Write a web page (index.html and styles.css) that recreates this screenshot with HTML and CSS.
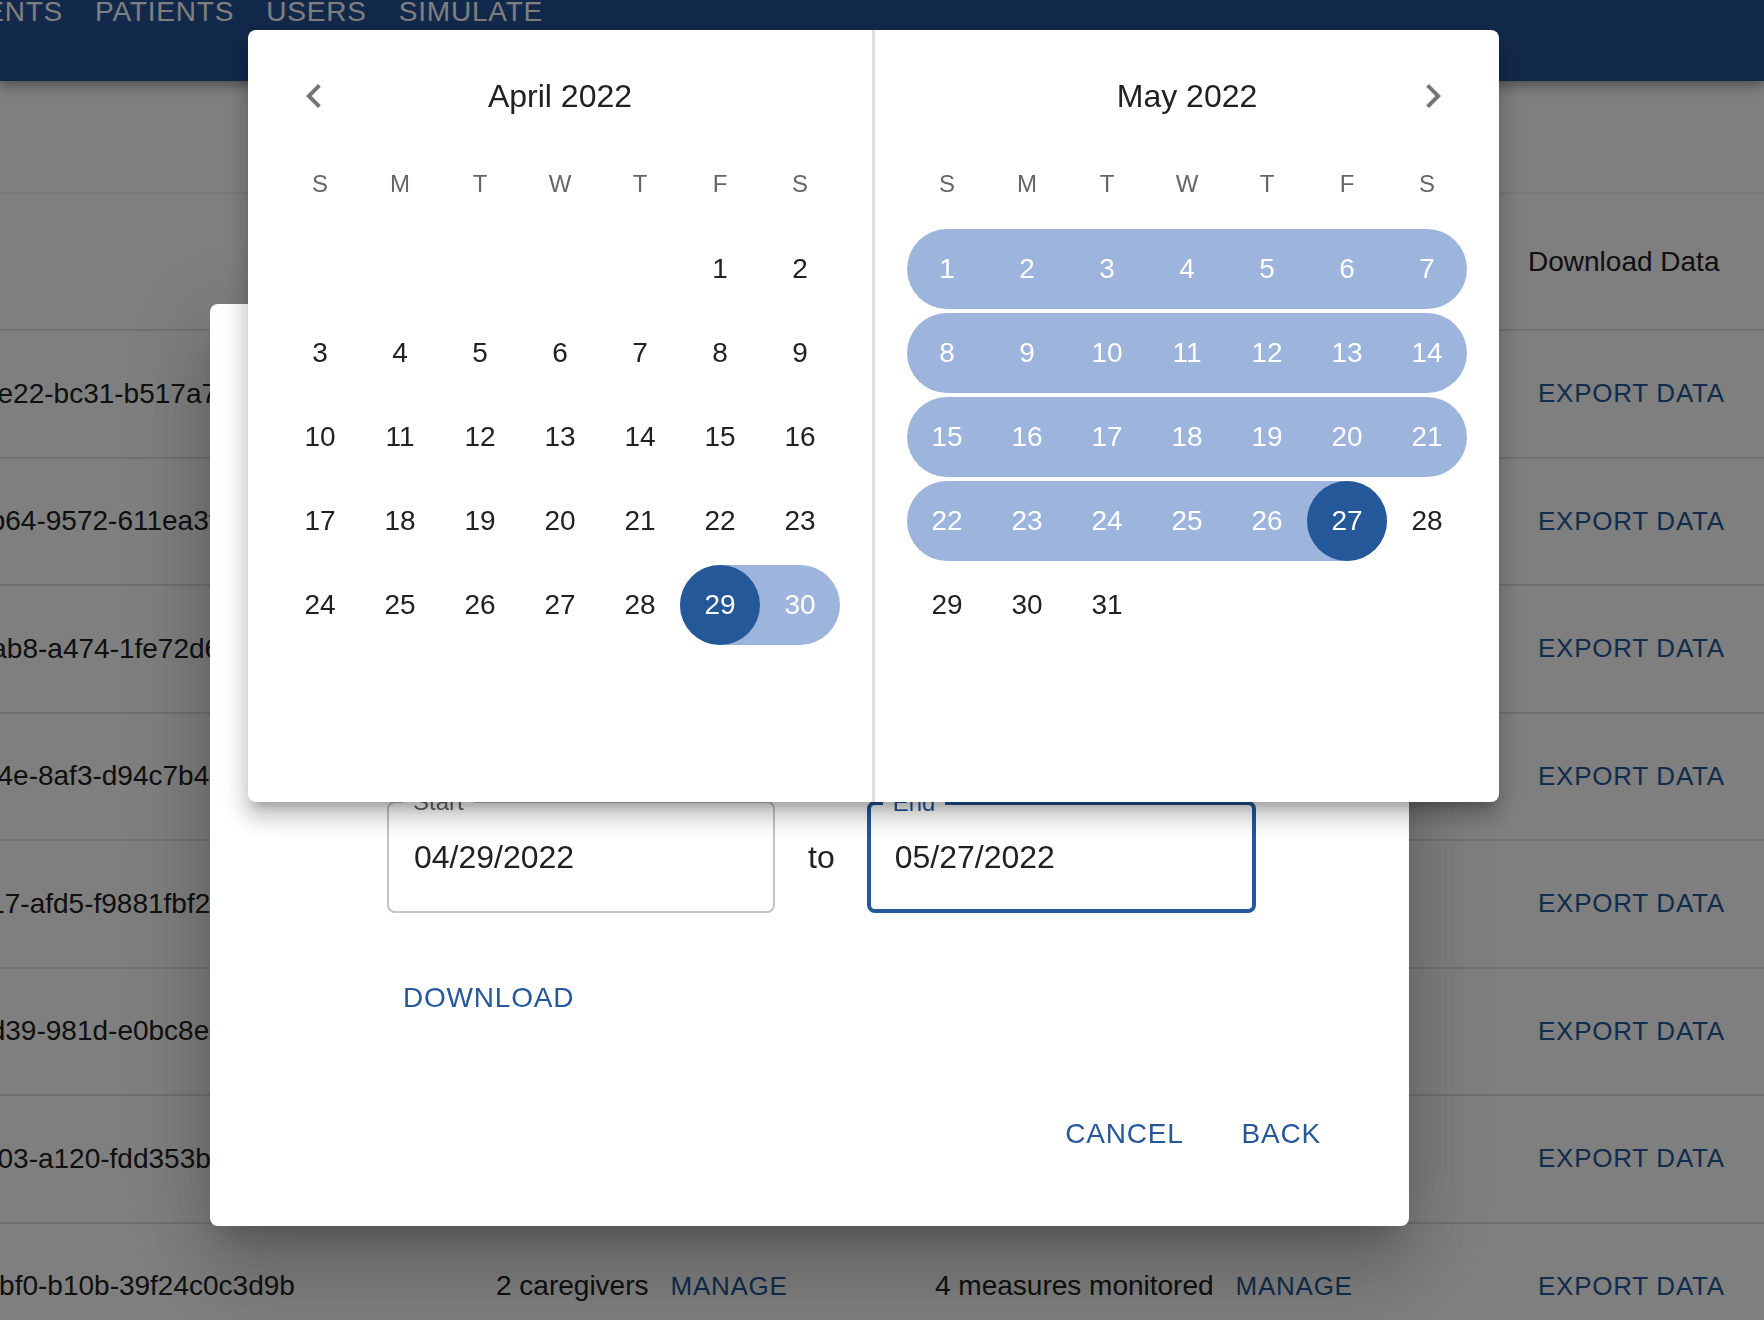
FILE: index.html
```html
<!DOCTYPE html>
<html lang="en">
<head>
    <meta charset="UTF-8">
    <title>Patients</title>
    <link rel="stylesheet" href="styles.css">
</head>
<body>

    <header class="appbar">
        <nav class="nav">
            <a>MEASUREMENTS</a>
            <a>PATIENTS</a>
            <a>USERS</a>
            <a>SIMULATE</a>
        </nav>
    </header>

    <div class="table">
        <div class="row head">
            <div class="cell">Patient ID</div>
            <div class="cell">Caregivers</div>
            <div class="cell">Measures</div>
            <div class="cell">Download Data</div>
        </div>
        <div class="row">
            <div class="cell">5d3a8b60-1c94-4e22-bc31-b517a7c9d204</div>
            <div class="cell">1 caregiver <button class="link">MANAGE</button></div>
            <div class="cell">3 measures monitored <button class="link">MANAGE</button></div>
            <div class="cell"><button class="link first">EXPORT DATA</button></div>
        </div>
        <div class="row">
            <div class="cell">a0c7e2d9-6f18-4b64-9572-611ea3f5c810</div>
            <div class="cell">2 caregivers <button class="link">MANAGE</button></div>
            <div class="cell">4 measures monitored <button class="link">MANAGE</button></div>
            <div class="cell"><button class="link first">EXPORT DATA</button></div>
        </div>
        <div class="row">
            <div class="cell">7e91b3f2-0d56-4ab8-a474-1fe72d6b9c31</div>
            <div class="cell">1 caregiver <button class="link">MANAGE</button></div>
            <div class="cell">2 measures monitored <button class="link">MANAGE</button></div>
            <div class="cell"><button class="link first">EXPORT DATA</button></div>
        </div>
        <div class="row">
            <div class="cell">f2d8f0c5-7a3b-494e-8af3-d94c7b4e1a60</div>
            <div class="cell">3 caregivers <button class="link">MANAGE</button></div>
            <div class="cell">4 measures monitored <button class="link">MANAGE</button></div>
            <div class="cell"><button class="link first">EXPORT DATA</button></div>
        </div>
        <div class="row">
            <div class="cell">e8b05f3c-9ffa-4517-afd5-f9881fbf2e07</div>
            <div class="cell">2 caregivers <button class="link">MANAGE</button></div>
            <div class="cell">1 measure monitored <button class="link">MANAGE</button></div>
            <div class="cell"><button class="link first">EXPORT DATA</button></div>
        </div>
        <div class="row">
            <div class="cell">3f6a1c84-b27e-4d39-981d-e0bc8e5a7f12</div>
            <div class="cell">2 caregivers <button class="link">MANAGE</button></div>
            <div class="cell">4 measures monitored <button class="link">MANAGE</button></div>
            <div class="cell"><button class="link first">EXPORT DATA</button></div>
        </div>
        <div class="row">
            <div class="cell">9b2e7f41-6c0d-4f03-a120-fdd353b8e9c5</div>
            <div class="cell">1 caregiver <button class="link">MANAGE</button></div>
            <div class="cell">3 measures monitored <button class="link">MANAGE</button></div>
            <div class="cell"><button class="link first">EXPORT DATA</button></div>
        </div>
        <div class="row">
            <div class="cell">d7a4e912-5b83-4bf0-b10b-39f24c0c3d9b</div>
            <div class="cell">2 caregivers <button class="link">MANAGE</button></div>
            <div class="cell">4 measures monitored <button class="link">MANAGE</button></div>
            <div class="cell"><button class="link first">EXPORT DATA</button></div>
        </div>
    </div>

    <div class="backdrop"></div>

    <div class="dialog">
        <h2 class="dialog-title">Download Data</h2>
        <div class="dialog-content">
            <div class="range">
                <div class="field">
                    <span class="field-label">Start</span>
                    <span class="field-value">04/29/2022</span>
                </div>
                <span class="to">to</span>
                <div class="field focused">
                    <span class="field-label">End</span>
                    <span class="field-value">05/27/2022</span>
                </div>
            </div>
            <button class="text-btn">DOWNLOAD</button>
        </div>
        <div class="dialog-actions">
            <button class="text-btn">CANCEL</button>
            <button class="text-btn">BACK</button>
        </div>
    </div>

    <!-- date range popper -->
    <div class="popover">
        <div class="month">
            <div class="month-head">
                <button class="arrow">
                    <svg viewBox="0 0 24 24"><path d="M15.41 7.41 14 6l-6 6 6 6 1.41-1.41L10.83 12z"/></svg>
                </button>
                <div class="month-title">April 2022</div>
            </div>
            <div class="weekdays">
                <span>S</span><span>M</span><span>T</span><span>W</span><span>T</span><span>F</span><span>S</span>
            </div>
            <div class="weeks">
                <div class="week">
                    <span class="day"></span><span class="day"></span><span class="day"></span><span class="day"></span><span class="day"></span><span class="day">1</span><span class="day">2</span>
                </div>
                <div class="week">
                    <span class="day">3</span><span class="day">4</span><span class="day">5</span><span class="day">6</span><span class="day">7</span><span class="day">8</span><span class="day">9</span>
                </div>
                <div class="week">
                    <span class="day">10</span><span class="day">11</span><span class="day">12</span><span class="day">13</span><span class="day">14</span><span class="day">15</span><span class="day">16</span>
                </div>
                <div class="week">
                    <span class="day">17</span><span class="day">18</span><span class="day">19</span><span class="day">20</span><span class="day">21</span><span class="day">22</span><span class="day">23</span>
                </div>
                <div class="week">
                    <span class="day">24</span><span class="day">25</span><span class="day">26</span><span class="day">27</span><span class="day">28</span><span class="day r rs sel"><b>29</b></span><span class="day r re">30</span>
                </div>
            </div>
        </div>

        <div class="divider"></div>

        <div class="month">
            <div class="month-head">
                <div class="month-title">May 2022</div>
                <button class="arrow">
                    <svg viewBox="0 0 24 24"><path d="M10 6 8.59 7.41 13.17 12l-4.58 4.59L10 18l6-6z"/></svg>
                </button>
            </div>
            <div class="weekdays">
                <span>S</span><span>M</span><span>T</span><span>W</span><span>T</span><span>F</span><span>S</span>
            </div>
            <div class="weeks">
                <div class="week">
                    <span class="day r rs">1</span><span class="day r">2</span><span class="day r">3</span><span class="day r">4</span><span class="day r">5</span><span class="day r">6</span><span class="day r re">7</span>
                </div>
                <div class="week">
                    <span class="day r rs">8</span><span class="day r">9</span><span class="day r">10</span><span class="day r">11</span><span class="day r">12</span><span class="day r">13</span><span class="day r re">14</span>
                </div>
                <div class="week">
                    <span class="day r rs">15</span><span class="day r">16</span><span class="day r">17</span><span class="day r">18</span><span class="day r">19</span><span class="day r">20</span><span class="day r re">21</span>
                </div>
                <div class="week">
                    <span class="day r rs">22</span><span class="day r">23</span><span class="day r">24</span><span class="day r">25</span><span class="day r">26</span><span class="day r re sel"><b>27</b></span><span class="day">28</span>
                </div>
                <div class="week">
                    <span class="day">29</span><span class="day">30</span><span class="day">31</span>
                </div>
            </div>
        </div>
    </div>

</body>
</html>
```

FILE: styles.css
```css
:root {
    --primary: #245898;
    --range: #9db4dc;
    --text: #212121;
    --muted: #666;
    --line: #e0e0e0;
}

* {
    box-sizing: border-box;
}

body {
    margin: 0;
    width: 1764px;
    height: 1320px;
    overflow: hidden;
    background: #fff;
    color: var(--text);
    font-family: 'Liberation Sans', Arial, Helvetica, sans-serif;
}

button {
    font: inherit;
    background: none;
    border: none;
    padding: 0;
    cursor: pointer;
}

/* app bar */

.appbar {
    position: relative;
    height: 81px;
    background: #245296;
    box-shadow: 0 4px 8px -2px rgba(0,0,0,0.2), 0 8px 10px 0 rgba(0,0,0,0.14), 0 2px 20px 0 rgba(0,0,0,0.12);
}

.nav {
    display: flex;
    margin-left: -199px;
}

.nav a {
    padding: 0 16px;
    margin-top: -2px;
    font-size: 28px;
    line-height: 28px;
    letter-spacing: 0.8px;
    color: #fff;
}

/* table */

.table {
    margin: 111px 0 0 -254px;
    width: 2018px;
}

.row {
    display: grid;
    grid-template-columns: 718px 439px 593px 1fr;
    align-items: center;
    height: 127.5px;
    border-bottom: 2px solid var(--line);
}

.row.head {
    height: 139px;
    border-top: 2px solid #f2f2f2;
}

.cell {
    display: flex;
    align-items: center;
    padding-left: 32px;
    font-size: 28px;
    white-space: nowrap;
}

.link {
    margin-left: 12px;
    padding: 8px 10px;
    font-size: 26px;
    letter-spacing: 0.74px;
    color: var(--primary);
}

.link.first {
    margin-left: 0;
}

/* modal */

.backdrop {
    position: fixed;
    inset: 0;
    z-index: 10;
    background: rgba(0,0,0,0.5);
}

.dialog {
    position: fixed;
    z-index: 11;
    left: 210px;
    top: 304px;
    width: 1199px;
    height: 922px;
    display: flex;
    flex-direction: column;
    background: #fff;
    border-radius: 8px;
    box-shadow: 0 22px 30px -14px rgba(0,0,0,0.2), 0 48px 76px 6px rgba(0,0,0,0.14), 0 18px 92px 16px rgba(0,0,0,0.12);
}

.dialog-title {
    margin: 0;
    padding: 40px 48px;
    font-size: 40px;
    font-weight: 500;
    line-height: 64px;
}

.dialog-content {
    padding: 353px 48px 0 177px;
}

.range {
    display: flex;
    align-items: center;
}

.field {
    position: relative;
    display: flex;
    align-items: center;
    width: 388px;
    height: 112px;
    padding-left: 25px;
    border: 2px solid #c4c4c4;
    border-radius: 8px;
}

.field.focused {
    width: 389px;
    padding-left: 24px;
    border: 4px solid var(--primary);
}

.field-label {
    position: absolute;
    top: -13px;
    left: 14px;
    padding: 0 10px;
    background: #fff;
    font-size: 24px;
    line-height: 24px;
    color: var(--muted);
}

.field.focused .field-label {
    top: -14px;
    left: 12px;
    color: var(--primary);
}

.field-value {
    font-size: 32px;
}

.to {
    margin: 0 32px 0 33px;
    font-size: 32px;
}

.text-btn {
    display: block;
    height: 73px;
    padding: 0 16px;
    font-size: 28px;
    letter-spacing: 0.8px;
    color: var(--primary);
}

.dialog-content .text-btn {
    margin-top: 48px;
}

.dialog-actions {
    margin-top: auto;
    display: flex;
    justify-content: flex-end;
    gap: 26px;
    padding: 0 72px 56px 0;
}

/* calendar popover */

.popover {
    position: fixed;
    z-index: 12;
    left: 248px;
    top: 30px;
    width: 1251px;
    height: 772px;
    display: flex;
    background: #fff;
    border-radius: 8px;
    box-shadow: 0 10px 10px -6px rgba(0,0,0,0.2), 0 16px 20px 2px rgba(0,0,0,0.14), 0 6px 28px 4px rgba(0,0,0,0.12);
}

.month {
    width: 624px;
    padding-top: 40px;
}

.divider {
    width: 3px;
    background: var(--line);
}

.month-head {
    display: grid;
    grid-template-columns: 48px 1fr 48px;
    align-items: center;
    height: 52px;
    padding: 0 42px;
    margin-bottom: 19px;
}

.month-title {
    grid-column: 2;
    grid-row: 1;
    text-align: center;
    font-size: 32px;
}

.arrow {
    width: 48px;
    height: 48px;
    grid-row: 1;
}

.month-head .month-title + .arrow {
    grid-column: 3;
}

.arrow svg {
    display: block;
    width: 48px;
    height: 48px;
    fill: #757575;
}

.weekdays {
    display: flex;
    align-items: center;
    width: 560px;
    height: 86px;
    margin: 0 auto;
    font-size: 24px;
    color: var(--muted);
}

.weekdays span {
    width: 80px;
    text-align: center;
}

.weeks {
    width: 560px;
    margin: 0 auto;
}

.week {
    display: flex;
    align-items: center;
    height: 84px;
}

.day {
    display: flex;
    align-items: center;
    justify-content: center;
    width: 80px;
    height: 80px;
    font-size: 28px;
}

.day.r {
    background: var(--range);
    color: #fff;
}

.day.rs {
    border-radius: 40px 0 0 40px;
}

.day.re {
    border-radius: 0 40px 40px 0;
}

.day.rs.re {
    border-radius: 40px;
}

.day.sel b {
    display: flex;
    align-items: center;
    justify-content: center;
    width: 80px;
    height: 80px;
    border-radius: 50%;
    background: var(--primary);
    font-weight: normal;
}
```
